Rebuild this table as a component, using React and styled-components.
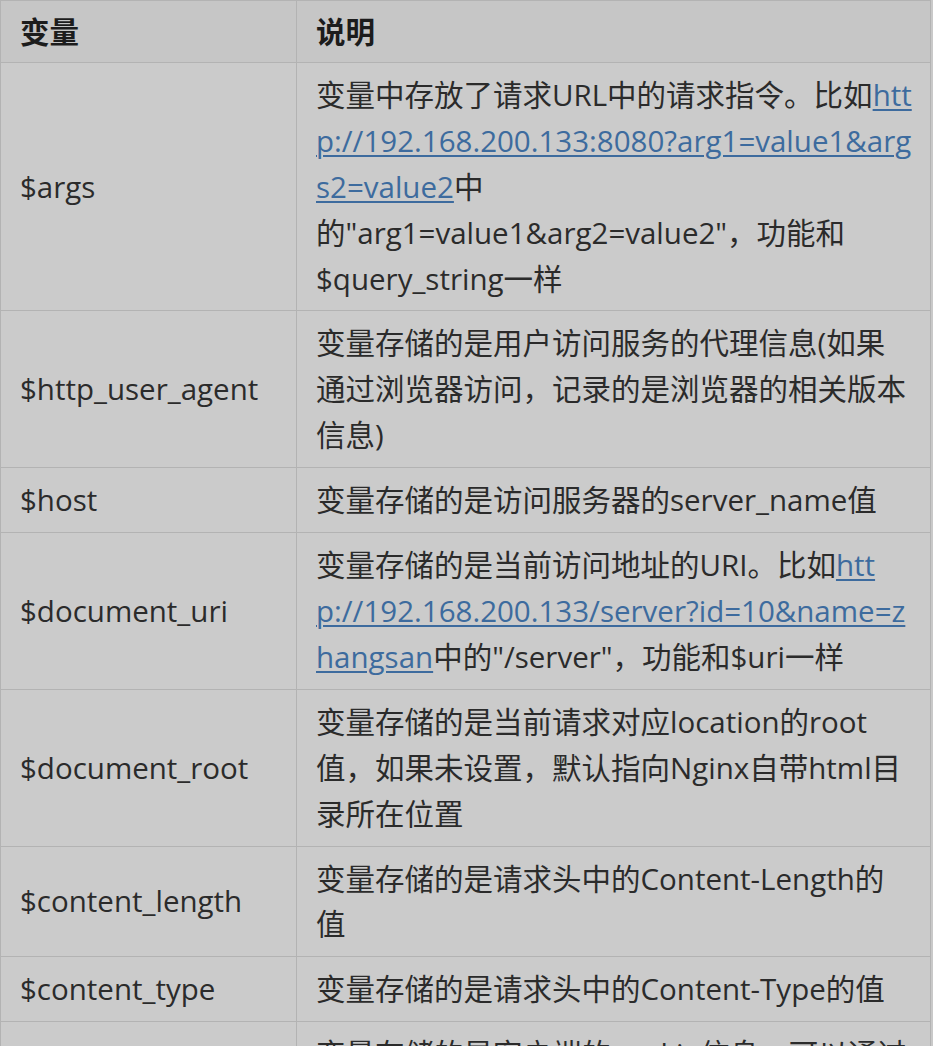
import React from "react";
import styled, { createGlobalStyle } from "styled-components";

// each description is a list of lines, a line is a list of parts (text or link)
const rows = [
  {
    name: "$args",
    lines: [
      ["变量中存放了请求URL中的请求指令。比如", { link: "htt" }],
      [{ link: "p://192.168.200.133:8080?arg1=value1&arg" }],
      [{ link: "s2=value2" }, "中"],
      ["的\"arg1=value1&arg2=value2\"，功能和"],
      ["$query_string一样"],
    ],
  },
  {
    name: "$http_user_agent",
    lines: [
      ["变量存储的是用户访问服务的代理信息(如果"],
      ["通过浏览器访问，记录的是浏览器的相关版本"],
      ["信息)"],
    ],
  },
  { name: "$host", lines: [["变量存储的是访问服务器的server_name值"]] },
  {
    name: "$document_uri",
    lines: [
      ["变量存储的是当前访问地址的URI。比如", { link: "htt" }],
      [{ link: "p://192.168.200.133/server?id=10&name=z" }],
      [{ link: "hangsan" }, "中的\"/server\"，功能和$uri一样"],
    ],
  },
  {
    name: "$document_root",
    lines: [
      ["变量存储的是当前请求对应location的root"],
      ["值，如果未设置，默认指向Nginx自带html目"],
      ["录所在位置"],
    ],
  },
  {
    name: "$content_length",
    lines: [["变量存储的是请求头中的Content-Length的"], ["值"]],
  },
  { name: "$content_type", lines: [["变量存储的是请求头中的Content-Type的值"]] },
  {
    name: "$http_cookie",
    lines: [
      ["变量存储的是客户端的cookie信息，可以通过"],
      ["add_header Set-Cookie 'cookieName=cookieV"],
      ["alue'来添加cookie数据"],
    ],
  },
];

function App() {
  return (
    <>
      <GlobalStyle />
      <Table>
        <colgroup>
          <col style={{ width: 296 }} />
          <col />
        </colgroup>
        <thead>
          <tr>
            <HeadCell>变量</HeadCell>
            <HeadCell>说明</HeadCell>
          </tr>
        </thead>
        <tbody>
          {rows.map((row) => (
            <tr key={row.name}>
              <Cell>{row.name}</Cell>
              <DescCell>
                {row.lines.map((line, li) => (
                  <Line key={li}>
                    {line.map((part, i) =>
                      typeof part === "string" ? (
                        <span key={i}>{part}</span>
                      ) : (
                        <Link key={i} href="#">
                          {part.link}
                        </Link>
                      )
                    )}
                  </Line>
                ))}
              </DescCell>
            </tr>
          ))}
        </tbody>
      </Table>
    </>
  );
}

export default App;

const GlobalStyle = createGlobalStyle`
  html, body {
    margin: 0;
    padding: 0;
    background: #c9c9c9;
    overflow: hidden;
  }
`;

const Table = styled.table`
  width: 931px;
  table-layout: fixed;
  border-collapse: collapse;
  font-family: "Open Sans", "Noto Sans CJK SC", sans-serif;
  font-size: 29.5px;
  line-height: 45.9px;
  color: #2b2b2b;
  background: #cbcbcb;
  border: 1px solid #b3b3b3;
`;

const HeadCell = styled.th`
  text-align: left;
  font-weight: 700;
  color: #1c1c1c;
  background: #c6c6c6;
  padding: 7.5px 19px;
  border: 1px solid #b3b3b3;
`;

const Cell = styled.td`
  padding: 9px 19px;
  border: 1px solid #b3b3b3;
  vertical-align: middle;
  white-space: nowrap;
`;

const DescCell = styled(Cell)`
  padding-right: 0;
`;

const Line = styled.div`
  white-space: nowrap;
`;

const Link = styled.a`
  color: #3d6b9e;
  text-decoration: underline;
  text-decoration-thickness: 2px;
  text-underline-offset: 3px;
`;
